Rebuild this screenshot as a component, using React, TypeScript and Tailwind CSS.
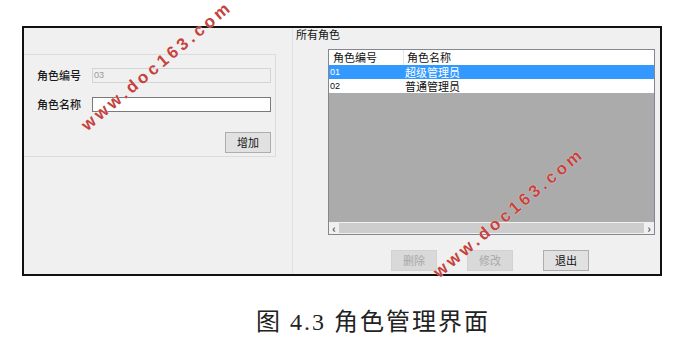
const cjk = "font-['Microsoft_YaHei','Noto_Sans_CJK_SC',sans-serif]";

const Label = ({ text }: { text: string }) => (
  <span className="w-[55px] shrink-0 text-[11px] leading-[15px] font-medium text-[#1a1a1a]">{text}</span>
);

const WinButton = ({ text, disabled }: { text: string; disabled?: boolean }) => (
  <button
    className={
      disabled
        ? "grid h-[21px] w-[46px] place-items-center border border-[#d2d2d2] bg-[#d9d9d9] text-[11px] text-[#a8a8a8]"
        : "grid h-[21px] w-[46px] place-items-center border border-[#adadad] bg-[#e1e1e1] text-[11px] text-[#111]"
    }
  >
    {text}
  </button>
);

const LeftPanel = () => (
  <div className="w-[269px] shrink-0 border-r border-[#e2e2e2]">
    <div className="mt-[26px] flex h-[103px] w-[252px] flex-col border-y border-r border-[#dcdcdc] pl-[13px] pr-[4px] pt-[13px]">
      <div className="flex items-center">
        <Label text="角色编号" />
        <div className="flex h-[15px] w-[180px] items-center border border-[#d4d4d4] bg-[#f0f0f0] pl-[1px] font-['Liberation_Sans',sans-serif] text-[9px] text-[#9a9a9a]">
          03
        </div>
      </div>
      <div className="mt-[14px] flex items-center">
        <Label text="角色名称" />
        <div className="h-[15px] w-[180px] border border-[#7a7a7a] bg-white" />
      </div>
      <div className="mt-[20px] flex justify-end">
        <WinButton text="增加" />
      </div>
    </div>
  </div>
);

const rows = [
  { id: "01", name: "超级管理员", selected: true },
  { id: "02", name: "普通管理员", selected: false },
];

const RoleTable = () => (
  <div className="ml-[35px] mt-[8px] flex h-[186px] w-[327px] flex-col border border-[#828790] bg-[#ababab]">
    <div className="flex h-[15px] bg-white text-[11px] leading-[15px] text-[#111]">
      <div className="w-[75px] border-r border-[#e5e5e5] pl-[4px]">角色编号</div>
      <div className="flex-1 pl-[3px]">角色名称</div>
    </div>
    {rows.map((r) => (
      <div
        key={r.id}
        className={
          r.selected
            ? "flex h-[14px] bg-[#3399ff] text-[11px] leading-[14px] text-white"
            : "flex h-[14px] bg-white text-[11px] leading-[14px] text-[#111]"
        }
      >
        <div className="w-[75px] pl-[1px] font-['Liberation_Sans',sans-serif] text-[9px]">{r.id}</div>
        <div className="flex-1 pl-[1px]">{r.name}</div>
      </div>
    ))}
    <div className="flex-1" />
    <div className="flex h-[12px] items-center bg-[#f0f0f0] text-[11px] font-bold leading-none text-[#505050]">
      <span className="grid w-[10px] place-items-center">‹</span>
      <div className="h-[10px] flex-1 bg-[#cdcdcd]" />
      <span className="grid w-[10px] place-items-center">›</span>
    </div>
  </div>
);

const RightPanel = () => (
  <div className="flex flex-1 flex-col">
    <div className="pl-[3px] text-[11px] leading-[13px] text-[#111]">所有角色</div>
    <RoleTable />
    <div className="ml-[98px] mt-[15px] flex gap-[30px]">
      <WinButton text="删除" disabled />
      <WinButton text="修改" disabled />
      <WinButton text="退出" />
    </div>
  </div>
);

const Watermark = ({ className }: { className: string }) => (
  <div
    className={`pointer-events-none absolute -translate-x-1/2 -translate-y-1/2 -rotate-40 whitespace-nowrap font-['Liberation_Sans',sans-serif] text-[17px] font-bold tracking-[3.5px] text-[#c4433d] [text-shadow:0_0_1px_#fff] ${className}`}
  >
    www.doc163.com
  </div>
);

export default function App() {
  return (
    <div className={`relative h-[349px] w-[687px] overflow-hidden bg-white ${cjk}`}>
      <div className="ml-[22px] mt-[26px] flex h-[250px] w-[640px] border-2 border-[#111] bg-[#f0f0f0]">
        <LeftPanel />
        <RightPanel />
      </div>
      <div className="ml-[256px] mt-[34px] font-['Liberation_Serif','Noto_Sans_CJK_SC',serif] text-[24px] leading-[24px] tracking-[2px] text-[#222]">
        图 4.3 角色管理界面
      </div>
      <Watermark className="left-[157px] top-[66px]" />
      <Watermark className="left-[509px] top-[213px]" />
    </div>
  );
}
